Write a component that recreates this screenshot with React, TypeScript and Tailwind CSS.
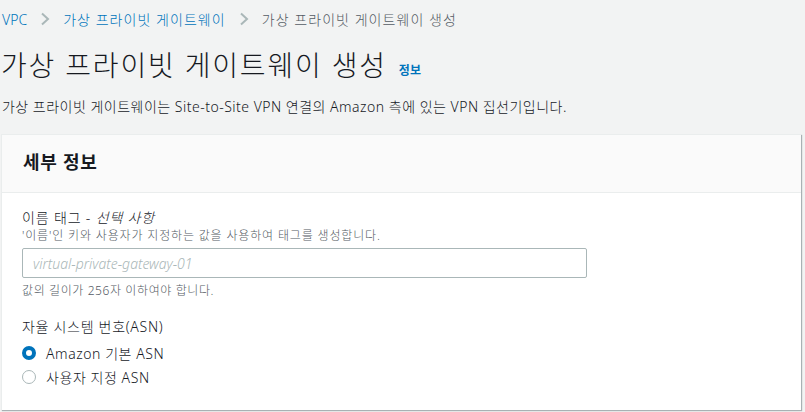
const font = { fontFamily: '"Noto Sans", "Noto Sans CJK KR", sans-serif' };

function Chevron() {
  return (
    <svg width="10" height="14" viewBox="0 0 10 14" className="mx-[13px]" aria-hidden="true">
      <path d="M2 1.5 L8 7 L2 12.5" fill="none" stroke="#aab7b8" strokeWidth="2" />
    </svg>
  );
}

function Radio({ checked, label }: { checked: boolean; label: string }) {
  return (
    <label className="flex items-center h-[24px] text-[14px] text-[#16191f] tracking-[0.04em]">
      {checked ? (
        <span className="w-[14px] h-[14px] rounded-full border-[4px] border-[#0073bb] bg-white" />
      ) : (
        <span className="w-[14px] h-[14px] rounded-full border border-[#aab7b8] bg-white" />
      )}
      <span className="ml-[10px]">{label}</span>
    </label>
  );
}

export default function App() {
  return (
    <div className="w-[805px] h-[412px] bg-[#f2f3f3] text-[#16191f] overflow-hidden font-light" style={font}>
      {/* Breadcrumbs */}
      <div className="flex items-center h-[38px] pl-[2px] text-[14px] tracking-[0.075em]">
        <span className="text-[#0073bb] tracking-normal">VPC</span>
        <Chevron />
        <span className="text-[#0073bb]">가상 프라이빗 게이트웨이</span>
        <Chevron />
        <span className="text-[#545b64]">가상 프라이빗 게이트웨이 생성</span>
      </div>

      {/* Title */}
      <div className="flex items-end pl-[1px] mt-[7px] h-[40px]">
        <h1 className="text-[28px] leading-[40px] font-light tracking-[0.065em]">가상 프라이빗 게이트웨이 생성</h1>
        <span className="ml-[12px] mb-[5px] text-[12px] font-bold text-[#0073bb]">정보</span>
      </div>
      <p className="pl-[2px] mt-[11px] text-[14px] leading-[22px] tracking-[0.035em]">
        가상 프라이빗 게이트웨이는 Site-to-Site VPN 연결의 Amazon 측에 있는 VPN 집선기입니다.
      </p>

      {/* Card */}
      <div className="ml-[1px] mt-[16px] w-[800px] bg-white border-t border-l border-[#eaeded] shadow-[1px_1px_1px_0_rgba(0,28,36,0.3)]">
        <div className="h-[58px] bg-[#fafafa] border-b border-[#eaeded] flex items-center px-[21px] pb-[3px]">
          <h2 className="text-[18px] font-bold tracking-[0.04em]">세부 정보</h2>
        </div>
        <div className="px-[20px] pt-[15px] pb-[21px]">
          <div className="text-[14px] leading-[20px] tracking-[0.06em]">
            이름 태그 - <i>선택 사항</i>
          </div>
          <div className="text-[12px] leading-[16px] text-[#545b64] tracking-[0.07em]">
            '이름'인 키와 사용자가 지정하는 값을 사용하여 태그를 생성합니다.
          </div>
          <div className="mt-[4px] w-[565px] h-[30px] border border-[#aab7b8] rounded-[2px] flex items-center px-[10px]">
            <span className="italic text-[14px] text-[#aab7b8]">virtual-private-gateway-01</span>
          </div>
          <div className="mt-[5px] text-[12px] leading-[16px] text-[#545b64] tracking-[0.05em]">
            값의 길이가 256자 이하여야 합니다.
          </div>
          <div className="mt-[17px] text-[14px] leading-[22px] tracking-[0.05em]">자율 시스템 번호(ASN)</div>
          <div className="mt-[3px] flex flex-col">
            <Radio checked label="Amazon 기본 ASN" />
            <Radio checked={false} label="사용자 지정 ASN" />
          </div>
        </div>
      </div>
    </div>
  );
}
